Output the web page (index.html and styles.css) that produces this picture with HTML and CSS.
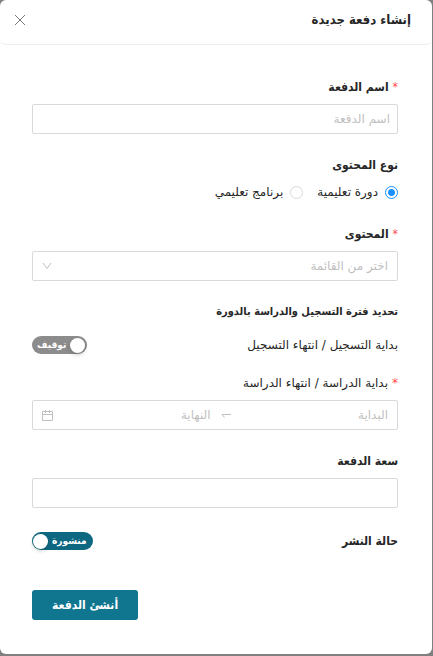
FILE: index.html
```html
<!DOCTYPE html>
<html lang="ar" dir="rtl">
<head>
<meta charset="utf-8">
<meta name="viewport" content="width=device-width, initial-scale=1">
<title>إنشاء دفعة جديدة</title>
<link rel="stylesheet" href="styles.css">
</head>
<body>
<main class="modal">
  <header class="modal-header">
    <h1 class="modal-title">إنشاء دفعة جديدة</h1>
    <button class="close" type="button" aria-label="إغلاق">
      <svg width="12" height="12" viewBox="0 0 12 12" fill="none" stroke="currentColor"><path d="M1 1l10 10M11 1L1 11"/></svg>
    </button>
  </header>
  <form class="form">
    <div class="field">
      <label class="label required" for="name">اسم الدفعة</label>
      <input class="control" id="name" type="text" placeholder="اسم الدفعة">
    </div>
    <fieldset class="field">
      <legend class="label">نوع المحتوى</legend>
      <div class="radios">
        <label class="radio"><input type="radio" name="kind" checked>دورة تعليمية</label>
        <label class="radio"><input type="radio" name="kind">برنامج تعليمي</label>
      </div>
    </fieldset>
    <div class="field">
      <label class="label required" for="content">المحتوى</label>
      <div class="control">
        <select class="bare" id="content"><option>اختر من القائمة</option></select>
        <svg class="icon" width="10" height="10" viewBox="0 0 10 10" fill="none" stroke="currentColor"><path d="M1 2l4 5.500 4-5.500"/></svg>
      </div>
    </div>
    <section class="field section">
      <h2 class="label section-title">تحديد فترة التسجيل والدراسة بالدورة</h2>
      <div class="row">
        <label class="label light" for="registration">بداية التسجيل / انتهاء التسجيل</label>
        <label class="switch"><input id="registration" type="checkbox" role="switch"><span class="knob"></span><span>توقيف</span></label>
      </div>
    </section>
    <div class="field">
      <label class="label light required" for="start">بداية الدراسة / انتهاء الدراسة</label>
      <div class="control">
        <input class="bare" id="start" type="text" placeholder="البداية">
        <svg class="icon arrow" width="10" height="10" viewBox="0 0 10 10" fill="none" stroke="currentColor"><path d="M10 4.500H1l2.500 3"/></svg>
        <input class="bare" type="text" placeholder="النهاية" aria-label="النهاية">
        <svg class="icon" width="11" height="11" viewBox="0 0 11 11" fill="none" stroke="currentColor"><path d="M.5 1.500h10v9H.5zM.5 4.500h10M3.500 0v3M7.500 0v3"/></svg>
      </div>
    </div>
    <div class="field">
      <label class="label" for="capacity">سعة الدفعة</label>
      <input class="control" id="capacity" type="text">
    </div>
    <div class="row status">
      <label class="label" for="status">حالة النشر</label>
      <label class="switch"><input id="status" type="checkbox" role="switch" checked><span class="knob"></span><span>منشورة</span></label>
    </div>
    <button class="submit" type="submit">أنشئ الدفعة</button>
  </form>
</main>
</body>
</html>
```
FILE: styles.css
```css
* {
  box-sizing: border-box;
}

body {
  margin: 0;
  padding: 0 1px 2px 0;
  background: #808080;
  color: #262626;
  font: 12px/22px "DejaVu Sans", sans-serif;
}

input,
select,
button {
  font: inherit;
}

.modal {
  background: #fff;
  border-radius: 6px;
}

.modal-header {
  display: flex;
  align-items: center;
  justify-content: space-between;
  padding: 10px 21px 14px 14px;
  border-bottom: 1px solid #ececec;
  border-radius: 6px;
}

.modal-title {
  margin: 0;
  font-family: "DejaVu Sans Condensed", "DejaVu Sans", sans-serif;
  font-size: 13px;
  line-height: 20px;
}

.close {
  display: flex;
  padding: 0;
  border: 0;
  background: none;
  color: #777;
}

.form {
  display: flex;
  flex-direction: column;
  padding: 31px 34px 34px 32px;
}

.field {
  display: flex;
  flex-direction: column;
  gap: 6px;
  min-width: 0;
  margin: 0 0 20px;
  padding: 0;
  border: 0;
}

.label {
  margin: 0;
  padding: 0;
  font-family: "DejaVu Sans Condensed", "DejaVu Sans", sans-serif;
  font-size: 12px;
  font-weight: 700;
  line-height: 22px;
}

.light {
  font-family: "DejaVu Sans", sans-serif;
  font-weight: 400;
}

.section-title {
  font-size: 11px;
}

.required::before {
  content: "*";
  margin-left: 4px;
  color: #ff4d4f;
  font-weight: 400;
}

.control {
  display: flex;
  align-items: center;
  width: 100%;
  height: 30px;
  padding: 0 9px;
  border: 1px solid #d9d9d9;
  border-radius: 2px;
  background: #fff;
  color: #bfbfbf;
}

input.control {
  padding: 0 7px;
}

.bare {
  flex: 1;
  min-width: 0;
  padding: 0;
  border: 0;
  outline: 0;
  appearance: none;
  background: none;
  color: inherit;
}

::placeholder {
  color: #bfbfbf;
  opacity: 1;
}

.icon {
  flex: none;
}

.arrow {
  margin-left: 10px;
}

.radios {
  display: flex;
  gap: 14px;
  padding-top: 5px;
}

.radio {
  display: flex;
  align-items: center;
  gap: 7px;
}

.radio input {
  width: 13px;
  height: 13px;
  margin: 0;
  appearance: none;
  border: 1px solid #d9d9d9;
  border-radius: 50%;
}

.radio input:checked {
  border-color: #1890ff;
  background: radial-gradient(circle, #1890ff 3px, #fff 4px);
}

.section {
  gap: 11px;
  margin-bottom: 16px;
}

.row {
  display: flex;
  align-items: center;
  justify-content: space-between;
}

.status {
  margin: 2px 0 38px;
}

.switch {
  display: flex;
  align-items: center;
  gap: 4px;
  height: 18px;
  padding: 0 2px 0 5px;
  border-radius: 9px;
  background: #8c8c8c;
  color: #fff;
  font-family: "DejaVu Sans Condensed", "DejaVu Sans", sans-serif;
  font-size: 10px;
  font-weight: 700;
  line-height: 18px;
}

.switch input {
  position: absolute;
  opacity: 0;
}

.knob {
  width: 15px;
  height: 15px;
  border-radius: 50%;
  background: #fff;
  box-shadow: 0 2px 4px #00230b33;
}

.switch:has(:checked) {
  flex-direction: row-reverse;
  padding: 0 6px 0 1px;
  background: #0f6881;
}

.submit {
  align-self: flex-end;
  height: 30px;
  padding: 0 20px;
  border: 0;
  border-radius: 3px;
  background: #10758f;
  color: #fff;
  font-family: "DejaVu Sans Condensed", "DejaVu Sans", sans-serif;
  font-weight: 700;
}
```
